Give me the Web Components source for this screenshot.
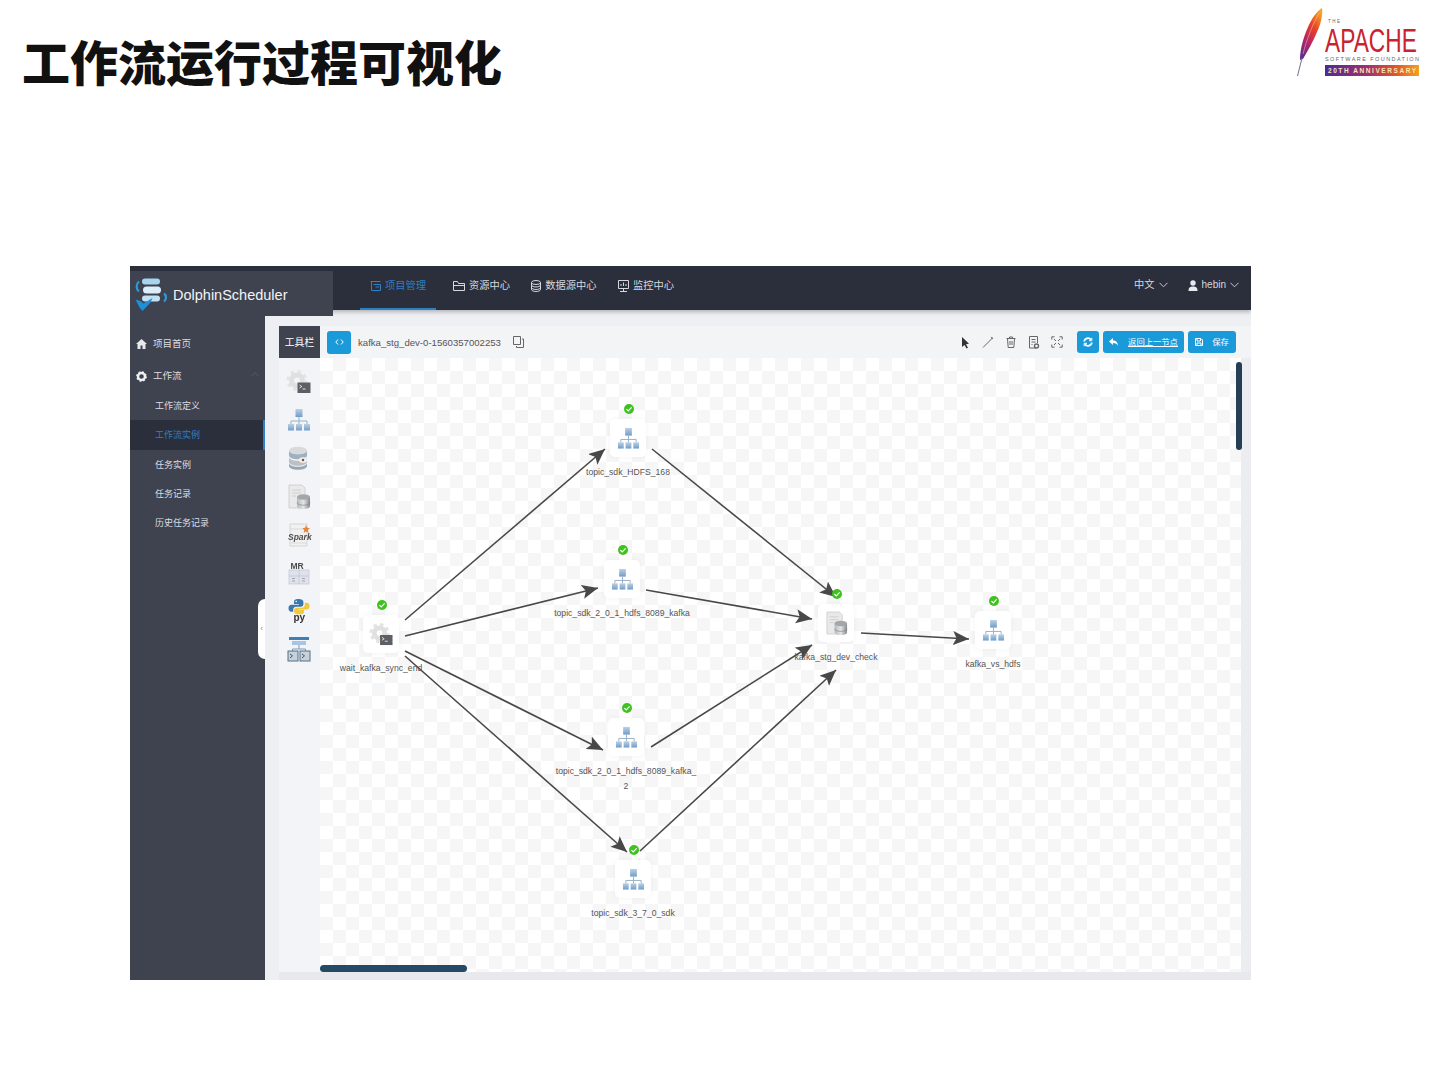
<!DOCTYPE html>
<html lang="zh">
<head>
<meta charset="utf-8">
<title>工作流运行过程可视化</title>
<style>
  html, body { margin: 0; padding: 0; background: #fff; }
  body { width: 1440px; height: 1080px; overflow: hidden; font-family: "Liberation Sans", "Noto Sans CJK SC", sans-serif; }
</style>
</head>
<body>
<ds-slide>
  <span slot="title">工作流运行过程可视化</span>
  <ds-apache-logo slot="logo"></ds-apache-logo>
  <ds-app>
    <ds-topnav slot="nav"></ds-topnav>
    <ds-sidebar slot="side"></ds-sidebar>
    <ds-workspace slot="main"></ds-workspace>
  </ds-app>
</ds-slide>

<script>
const CJK = '"Liberation Sans", "Noto Sans CJK SC", sans-serif';

// task type icons, used both in the toolbar and inside the dag nodes
const gradDefs = `<defs>
  <linearGradient id="blue" x1="0" y1="0" x2="0" y2="1"><stop offset="0" stop-color="#bcd0e3"/><stop offset="1" stop-color="#6f9dca"/></linearGradient>
  <linearGradient id="db" x1="0" y1="0" x2="1" y2="0"><stop offset="0" stop-color="#b5b8bb"/><stop offset=".5" stop-color="#e4e5e6"/><stop offset="1" stop-color="#85888b"/></linearGradient>
</defs>`;
const ICONS = {
  shell: `<circle cx="10" cy="10.500" r="9" fill="none" stroke="#e4e4e4" stroke-width="3" stroke-dasharray="3.600 3.500"/>
    <circle cx="10" cy="10.500" r="5.500" fill="none" stroke="#e0e0e0" stroke-width="5"/>
    <rect x="10.500" y="12.500" width="13" height="10.500" fill="#5c5f63"/><path d="M12.500 15l2.300 1.500-2.300 1.500M15.500 19h3" stroke="#fff" stroke-width=".8" fill="none"/>`,
  hier: `<rect x="8.500" y="1" width="7" height="8" fill="url(#blue)"/>
    <path d="M12 9v4M4 16v-3h16v3M12 13v3" stroke="#9ab0c6" stroke-width="1" fill="none"/>
    <rect x="1" y="16" width="6" height="6.500" fill="url(#blue)"/><rect x="9" y="16" width="6" height="6.500" fill="url(#blue)"/><rect x="17" y="16" width="6" height="6.500" fill="url(#blue)"/>`,
  sql: `<ellipse cx="11" cy="4.500" rx="9" ry="3.800" fill="#d8dadc"/><path d="M2 4.500v5c0 2.100 4 3.800 9 3.800s9-1.700 9-3.800v-5c0 2.100-4 3.800-9 3.800S2 6.600 2 4.500z" fill="#9fb0c0"/>
    <path d="M2 11v5c0 2.100 4 3.800 9 3.800s9-1.700 9-3.800v-5c0 2.100-4 3.800-9 3.800S2 13.100 2 11z" fill="#bcc0c4"/><path d="M2 17v3c0 2.100 4 3.800 9 3.800s9-1.700 9-3.800v-3c0 2.100-4 3.800-9 3.800S2 19.100 2 17z" fill="#98a6b3"/>
    <ellipse cx="16" cy="14" rx="4" ry="2.800" fill="#f3f3f3"/><circle cx="16" cy="14" r="1.300" fill="#8a4a3a"/>`,
  proc: `<path d="M2 0h13l3 3v20H2z" fill="#e9e9e9" stroke="#c9c9c9" stroke-width=".8"/><path d="M5 5h9M5 8h9M5 11h4" stroke="#d0d0d0"/>
    <path d="M10 12v9c0 1.700 3 3 6.500 3s6.500-1.300 6.500-3v-9z" fill="url(#db)"/><ellipse cx="16.500" cy="12" rx="6.500" ry="2.800" fill="#a4a7aa"/><path d="M10 17.500c0 1.500 3 2.700 6.500 2.700s6.500-1.200 6.500-2.700" fill="none" stroke="#777" stroke-width=".6"/>`,
  spark: `<path d="M3 1h17v22H3z" fill="#f1f1f1" stroke="#cfcfcf" stroke-width=".8"/><path d="M3 6h17M3 20h17" stroke="#d9d9d9"/>
    <text x="1" y="17" font-family="Liberation Sans, sans-serif" font-size="8.500" font-style="italic" font-weight="700" fill="#4d4d4d">Spark</text>
    <path d="M19 2l1.200 2.800 2.800.4-2.200 1.800.8 3-2.600-1.600-2.400 1.600.7-3-2-1.800 2.800-.4z" fill="#e8833a"/>`,
  mr: `<rect x="2" y="9" width="20" height="14" fill="#dfe2ea" stroke="#c4c7d0" stroke-width=".7"/><path d="M2 15h20M12 9v14" stroke="#c0c3cc" stroke-width=".7"/>
    <text x="3.500" y="8" font-family="Liberation Sans, sans-serif" font-size="8.500" font-weight="700" fill="#4c4c4c">MR</text>
    <path d="M5 17.500h3M5 20h3M15 17.500h3M15 20h3" stroke="#9a9da8" stroke-width=".9"/>`,
  python: `<path d="M11.500 0C8 0 7 1.200 7 2.800V5h4.800v.8H4.500C2.400 5.800 1.500 7.200 1.500 9.300c0 2.100 1 3.400 3 3.400h1.700v-2c0-1.700 1.300-3 3-3h4.700c1.400 0 2.500-1.100 2.500-2.500V2.800C16.400 1.100 14.600 0 11.500 0z" fill="#3a79ad"/><circle cx="9.200" cy="2.500" r=".8" fill="#fff"/>
    <path d="M12.500 15.500c3.500 0 4.500-1.100 4.500-2.400v-2.100h-4.800v-.6h7.300c2.100 0 3-1.300 3-3.400 0-2.100-1-3.200-3-3.200h-1.700v2c0 1.700-1.300 3-3 3H9.600c-1.400 0-2.500 1.100-2.500 2.500v1.800c0 1.600 2.300 2.400 5.400 2.400z" fill="#f2c83c"/>
    <text x="6.500" y="21.500" font-family="Liberation Sans, sans-serif" font-size="10" font-weight="700" fill="#333">py</text>`,
  sub: `<rect x="2" y="0" width="20" height="3" fill="#3f7fb8"/><rect x="5" y="4" width="14" height="4" fill="#a8c6e2"/><path d="M12 8v4M5.500 14v-2h13v2" stroke="#7b9ab8" fill="none"/>
    <rect x="1" y="14" width="10" height="10" fill="#c8d0d8" stroke="#50708c"/><rect x="13" y="14" width="10" height="10" fill="#c8d0d8" stroke="#50708c"/>
    <path d="M3 17l2.500 1.800L3 21M15 17l2.500 1.800L15 21" stroke="#40586e" fill="none"/>`
};

class DsSlide extends HTMLElement {
  constructor() {
    super();
    this.attachShadow({ mode: 'open' }).innerHTML = `<style>
      :host { display: block; width: 1440px; height: 1080px; background: #fff; }
      header { display: flex; justify-content: space-between; align-items: flex-start; height: 266px; padding-left: 22px; box-sizing: border-box; }
      h1 { margin: 30px 0 0; font: 900 48px/70px ${CJK}; color: #111; letter-spacing: 0; }
      .logo { margin-top: 6px; }
      .frame { margin-left: 130px; width: 1121px; }
    </style>
    <header><h1><slot name="title"></slot></h1><div class="logo"><slot name="logo"></slot></div></header>
    <div class="frame"><slot></slot></div>`;
  }
}

class DsApacheLogo extends HTMLElement {
  constructor() {
    super();
    this.attachShadow({ mode: 'open' }).innerHTML = `<style>:host { display: block; width: 143px; height: 72px; } svg { display: block; }</style>
    <svg width="143" height="72" viewBox="0 0 143 72">
      <defs>
        <linearGradient id="fe" x1=".8" y1="0" x2=".2" y2="1"><stop offset="0" stop-color="#f5a623"/><stop offset=".35" stop-color="#e8412a"/><stop offset=".7" stop-color="#b3226a"/><stop offset="1" stop-color="#5d2d8c"/></linearGradient>
        <linearGradient id="band"><stop offset="0" stop-color="#4a2a9c"/><stop offset=".45" stop-color="#a0306e"/><stop offset=".75" stop-color="#e0552c"/><stop offset="1" stop-color="#f5a01c"/></linearGradient>
      </defs>
      <path d="M25 2C26 8 24 18 20 26 16 36 10 46 6 53L3 54C3 44 6 32 11 21 15 12 20 5 25 2z" fill="url(#fe)"/>
      <path d="M.5 70L5 52" stroke="#7a6a8c" stroke-width="1" fill="none"/>
      <path d="M22 7C16 18 10 32 6 48" stroke="#f9d9a8" stroke-width=".7" fill="none" opacity=".7"/>
      <text x="31" y="16.500" font-family="Liberation Sans, sans-serif" font-size="4.500" fill="#666" textLength="12" lengthAdjust="spacing">THE</text>
      <text transform="translate(28 46) scale(.69 1)" font-family="Liberation Sans, sans-serif" font-size="33" fill="#c8242f">APACHE</text>
      <text x="28" y="55" font-family="Liberation Sans, sans-serif" font-size="5.500" fill="#666" textLength="94" lengthAdjust="spacing">SOFTWARE FOUNDATION</text>
      <rect x="28" y="59" width="94" height="11" fill="url(#band)"/>
      <text x="31" y="67" font-family="Liberation Sans, sans-serif" font-size="6.500" font-weight="700" fill="#f6e7b0" textLength="88" lengthAdjust="spacing">20TH ANNIVERSARY</text>
    </svg>`;
  }
}

class DsApp extends HTMLElement {
  constructor() {
    super();
    this.attachShadow({ mode: 'open' }).innerHTML = `<style>
      :host { display: grid; position: relative; grid-template-columns: 135px 1fr; grid-template-rows: 44px 1fr; height: 714px; overflow: hidden; }
      .nav { grid-column: 1 / 3; z-index: 1; box-shadow: 0 2px 4px rgba(0,0,0,.25); }
      .brand { position: absolute; left: 0; top: 5px; width: 203px; height: 45px; background: #3f4350; z-index: 2; display: flex; align-items: center; padding-left: 2px; box-sizing: border-box; font: 14.500px/1 "Liberation Sans", sans-serif; gap: 1px; }
      .brand span { margin-top: 4px; color: #f2f3f5; }
      .fold { position: absolute; left: 128px; top: 333px; width: 7px; height: 60px; background: #fff; border-radius: 7px 0 0 7px; z-index: 2; display: flex; align-items: center; justify-content: center; color: #888; font: 8px/1 "Liberation Sans", sans-serif; }
    </style>
    <div class="nav"><slot name="nav"></slot></div>
    <slot name="side"></slot>
    <slot name="main"></slot>
    <div class="brand">
      <svg width="40" height="38" viewBox="0 0 40 38">
        <path d="M7 6.500a6.500 6.500 0 0 0 0 10" stroke="#2b9bd8" stroke-width="2.200" fill="none"/>
        <path d="M32 18.500a5 5 0 0 1 0 8" stroke="#2b9bd8" stroke-width="2.200" fill="none"/>
        <rect x="10" y="3.500" width="18" height="6" rx="3" fill="#a8d4ee"/>
        <rect x="11" y="11.500" width="18" height="7" rx="3.500" fill="#dceef9"/>
        <rect x="10" y="20.500" width="18" height="6" rx="3" fill="#c4e0f3"/>
        <path d="M3.500 24.500l5 1.500 3 2.500 9-5.500-2 4.500-8 8.500-3-3.500z" fill="#1f8fd8"/>
      </svg>
      <span>DolphinScheduler</span>
    </div>
    <div class="fold">‹</div>`;
  }
}

class DsTopnav extends HTMLElement {
  constructor() {
    super();
    const item = (svg, text, w, cls) => `<a class="${cls || ''}" style="width:${w}px">${svg}<span>${text}</span></a>`;
    const stroke = 'fill="none" stroke="currentColor" stroke-width="1"';
    const chev = `<svg width="9" height="6" viewBox="0 0 9 6"><path d="M.5 .8l4 4 4-4" fill="none" stroke="#c8cad0" stroke-width="1"/></svg>`;
    this.attachShadow({ mode: 'open' }).innerHTML = `<style>
      :host { display: flex; height: 44px; background: #2b2e3b; color: #d6d8de; font: 10.250px/1 ${CJK}; padding-left: 230px; padding-right: 12px; align-items: stretch; white-space: nowrap; }
      a { display: flex; align-items: center; justify-content: center; gap: 3px; height: 44px; box-sizing: border-box; padding-bottom: 2px; border-bottom: 2px solid transparent; flex: none; }
      a.on { color: #2f7fc4; border-bottom-color: #2f7fc4; }
      .right { margin-left: auto; display: flex; align-items: center; gap: 20px; padding-bottom: 6px; }
      .right div { display: flex; align-items: center; gap: 4px; }
      .right div.user { font-size: 10px; }
    </style>
    ${item(`<svg width="12" height="12" viewBox="0 0 12 12" ${stroke}><path d="M.5 1.500h10M1.500 1.500v9h9M3.500 4.500h7v6M5.500 7h4"/></svg>`, '项目管理', 76, 'on')}
    <div style="width:16px"></div>
    ${item(`<svg width="13" height="12" viewBox="0 0 13 12" ${stroke}><path d="M.5 10.500v-9h4l1 2h6v7zM.5 5.500h11"/></svg>`, '资源中心', 59)}
    <div style="width:18px"></div>
    ${item(`<svg width="12" height="12" viewBox="0 0 12 12" ${stroke}><ellipse cx="6" cy="2.500" rx="4.500" ry="2"/><path d="M1.500 2.500v7c0 1.100 2 2 4.500 2s4.500-.9 4.500-2v-7M1.500 5c0 1.100 2 2 4.500 2s4.500-.9 4.500-2M1.500 7.500c0 1.100 2 2 4.500 2s4.500-.9 4.500-2"/></svg>`, '数据源中心', 69)}
    <div style="width:18px"></div>
    ${item(`<svg width="13" height="13" viewBox="0 0 13 13" ${stroke}><path d="M1.500 .5h10v8h-10zM6.500 8.500v3M3 11.500h7M4 6V4M6.500 6V2.500M9 6V4"/></svg>`, '监控中心', 59)}
    <div class="right">
      <div>中文 ${chev}</div>
      <div class="user"><svg width="10" height="11" viewBox="0 0 10 11" fill="#e8e9ec"><circle cx="5" cy="3" r="2.700"/><path d="M.5 11c0-3.500 1.500-4.500 4.500-4.500s4.500 1 4.500 4.500z"/></svg>hebin ${chev}</div>
    </div>`;
  }
}

class DsSidebar extends HTMLElement {
  constructor() {
    super();
    const home = `<svg width="11" height="10" viewBox="0 0 11 10" fill="#e8e9ec"><path d="M5.500 0L0 5h1.500v5h3V6.500h2V10h3V5H11z"/></svg>`;
    const gear = `<svg width="11" height="11" viewBox="0 0 11 11"><circle cx="5.500" cy="5.500" r="3.500" fill="none" stroke="#f0f1f3" stroke-width="2.400"/><circle cx="5.500" cy="5.500" r="4.700" fill="none" stroke="#f0f1f3" stroke-width="1.300" stroke-dasharray="1.800 1.900"/></svg>`;
    this.attachShadow({ mode: 'open' }).innerHTML = `<style>
      :host { display: block; background: #3f4350; color: #dcdde2; font: 9px/1 ${CJK}; padding-top: 17px; }
      .top { height: 32px; display: flex; align-items: center; gap: 6px; padding: 2px 0 0 6px; box-sizing: border-box; font-size: 9.500px; }
      .sub { height: 29.300px; display: flex; align-items: center; padding: 2px 0 0 25px; box-sizing: border-box; }
      .sub.on { background: #2b2e3b; color: #2f7fc4; border-right: 2px solid #2f7fc4; }
      .arrow { margin-left: auto; margin-right: 7px; width: 5px; height: 5px; border-top: 1px solid #4f5360; border-left: 1px solid #4f5360; transform: rotate(45deg); }
    </style>
    <div class="top">${home}项目首页</div>
    <div class="top">${gear}工作流<span class="arrow"></span></div>
    <div class="sub">工作流定义</div>
    <div class="sub on">工作流实例</div>
    <div class="sub">任务实例</div>
    <div class="sub">任务记录</div>
    <div class="sub">历史任务记录</div>`;
  }
}

class DsTaskIcon extends HTMLElement {
  constructor() {
    super();
    const size = this.getAttribute('size') || 24;
    this.attachShadow({ mode: 'open' }).innerHTML = `<style>:host { display: block; width: ${size}px; height: ${size}px; } svg { display: block; overflow: visible; filter: blur(.35px); }</style>
    <svg width="${size}" height="${size}" viewBox="0 0 24 24">${gradDefs}${ICONS[this.getAttribute('type')]}</svg>`;
  }
}

class DsWorkspace extends HTMLElement {
  constructor() {
    super();
    const tools = ['shell', 'hier', 'sql', 'proc', 'spark', 'mr', 'python', 'sub'];
    const s = 'fill="none" stroke="#666" stroke-width="1"';
    this.attachShadow({ mode: 'open' }).innerHTML = `<style>
      :host { display: grid; grid-template-columns: 41px 921px 10px; grid-template-rows: 32px 614px 8px; padding: 16px 0 0 14px; background: #eeeff2; position: relative; font: 10px/1 ${CJK}; }
      .head { background: #3f4350; color: #fff; font: 9.800px/33px ${CJK}; text-align: center; }
      .strip { background: #f3f4f6; display: flex; align-items: center; padding: 0 15px 0 7px; grid-column: 2 / 4; color: #555; }
      .code { width: 24px; height: 23px; border-radius: 3px; background: #1a9ad9; color: #fff; display: flex; align-items: center; justify-content: center; }
      .name { margin: 1px 0 0 7px; color: #555; font-size: 9.600px; white-space: nowrap; }
      .copy { margin-left: 12px; display: flex; }
      .tools { margin-left: auto; display: flex; align-items: center; gap: 11px; margin-right: 10px; }
      .btn { height: 22px; border-radius: 3px; background: #1a9ad9; color: #fff; display: flex; align-items: center; justify-content: center; gap: 9px; font-size: 8.300px; margin-left: 4px; white-space: nowrap; }
      .btn u { text-decoration-thickness: 1px; }
      .col { background: #f3f4f8; display: flex; flex-direction: column; align-items: center; padding: 12px 1px 0 0; gap: 14.200px; }
      .rb { background: #eceDF0; }
      .bb { grid-column: 1 / 4; background: #e8e9ec; }
      .vbar { position: absolute; left: 971px; top: 52px; width: 6px; height: 88px; border-radius: 3px; background: #263f55; }
      .hbar { position: absolute; left: 55px; top: 655px; width: 147px; height: 7px; border-radius: 4px; background: #264a66; }
    </style>
    <div class="head">工具栏</div>
    <div class="strip">
      <div class="code"><svg width="9" height="8" viewBox="0 0 9 8" fill="none" stroke="#fff" stroke-width="1"><path d="M3 1.500L.8 4 3 6.500M6 1.500L8.200 4 6 6.500"/></svg></div>
      <span class="name">kafka_stg_dev-0-1560357002253</span>
      <span class="copy"><svg width="11" height="12" viewBox="0 0 11 12" ${s}><path d="M.5 .5h7v8h-7z"/><path d="M9 3h1.500v8.500h-7V10"/></svg></span>
      <div class="tools">
        <svg width="12" height="13" viewBox="0 0 12 13" fill="#333"><path d="M3 1v10l2.500-2 2 3.500 1.500-.8-2-3.500 3-.4z"/></svg>
        <svg width="12" height="12" viewBox="0 0 12 12" ${s}><path d="M1 11.500L10 2.500"/><path d="M9.500 2.500l1-1" stroke-width="2"/></svg>
        <svg width="12" height="12" viewBox="0 0 12 12" ${s}><path d="M1.500 2.500h9M4.500 2.500v-1.500h3v1.500M2.500 2.500l.7 9h5.600l.7-9M5 5v4M7 5v4"/></svg>
        <svg width="12" height="13" viewBox="0 0 12 13" ${s}><path d="M8 12H1.500V.5h8V7M3.500 3.500h4M3.500 6h4M3.500 8.500h1"/><circle cx="8.500" cy="10" r="2" stroke-width="1.400"/></svg>
        <svg width="12" height="12" viewBox="0 0 12 12" ${s}><path d="M.8 3.500V.8H3.500M8.500 .8h2.700V3.500M.8 8.500v2.700H3.500M8.500 11.200h2.700V8.500M3 3l2 2M9 3L7 5M3 9l2-2M9 9L7 7"/></svg>
      </div>
      <div class="btn" style="width:22px"><svg width="10" height="10" viewBox="0 0 10 10" fill="none" stroke="#fff" stroke-width="1.800"><path d="M1.200 4.500a3.800 3.800 0 0 1 6.800-1.800M8.800 5.500a3.800 3.800 0 0 1-6.800 1.800"/><path d="M8.800 .8v2.900H6M1.200 9.200V6.300H4" stroke-width="1"/></svg></div>
      <div class="btn" style="width:81px"><svg width="10" height="9" viewBox="0 0 10 9" fill="#fff"><path d="M4 0L0 3.500 4 7V5c2.500 0 4 .8 5 3 0-3.500-2-5.500-5-5.500z"/></svg><u>返回上一节点</u></div>
      <div class="btn" style="width:48px"><svg width="8" height="8" viewBox="0 0 8 8" fill="none" stroke="#fff" stroke-width="1"><path d="M.5 .5h5.500l1.500 1.500v5.500h-7zM2 .5v2.500h3.500V.5M2 7.500V5h4v2.500"/></svg>保存</div>
    </div>
    <div class="col">${tools.map((t) => `<ds-task-icon type="${t}"></ds-task-icon>`).join('')}</div>
    <ds-dag></ds-dag>
    <div class="rb"></div>
    <div class="bb"></div>
    <div class="vbar"></div>
    <div class="hbar"></div>`;
  }
}

class DsNode extends HTMLElement {
  constructor() {
    super();
    const type = this.getAttribute('type');
    this.attachShadow({ mode: 'open' }).innerHTML = `<style>
      :host { position: absolute; left: ${this.getAttribute('x')}px; top: ${this.getAttribute('y') - 35}px; transform: translateX(-50%); width: 160px; display: flex; flex-direction: column; align-items: center; color: #555; font: 8.650px/15px "Liberation Sans", sans-serif; text-align: center; white-space: nowrap; }
      .check { width: 12px; height: 12px; display: block; transform: translateX(1px); }
      .box { width: 36px; height: 38px; margin-top: 4px; background: #fff; border-radius: 5px; box-shadow: 0 0 6px rgba(0,0,0,.05); display: flex; align-items: center; justify-content: center; }
      .label { margin-top: 8px; }
    </style>
    <svg class="check" viewBox="0 0 12 12"><circle cx="6" cy="6" r="5" fill="#3fc21f"/><path d="M3.400 6.100l1.900 1.900 3.300-3.600" fill="none" stroke="#fff" stroke-width="1.200"/></svg>
    <div class="box"><ds-task-icon type="${type}" size="23"></ds-task-icon></div>
    <div class="label"><slot></slot></div>`;
  }
}

class DsDag extends HTMLElement {
  constructor() {
    super();
    // [x1,y1,x2,y2] in canvas coordinates, tip of the arrow at x2,y2
    const edges = [
      [85, 262, 285, 91], [85, 278, 278, 230], [85, 293, 283, 392], [85, 298, 307, 494],
      [332, 91, 516, 239], [326, 232, 492, 261], [331, 389, 492, 287], [320, 493, 516, 312],
      [541, 275, 649, 281]
    ];
    const nodes = [
      ['hier', 308, 80, 'topic_sdk_HDFS_168'],
      ['hier', 302, 221, 'topic_sdk_2_0_1_hdfs_8089_kafka'],
      ['shell', 61, 276, 'wait_kafka_sync_end'],
      ['proc', 516, 265, 'kafka_stg_dev_check'],
      ['hier', 673, 272, 'kafka_vs_hdfs'],
      ['hier', 306, 379, 'topic_sdk_2_0_1_hdfs_8089_kafka_<br>2'],
      ['hier', 313, 521, 'topic_sdk_3_7_0_sdk']
    ];
    this.attachShadow({ mode: 'open' }).innerHTML = `<style>
      :host { display: block; position: relative; overflow: hidden; background: #fff conic-gradient(#f6f6f7 25%, #fff 0 50%, #f6f6f7 0 75%, #fff 0) 0 0 / 26px 26px; }
      svg { position: absolute; left: 0; top: 0; }
    </style>
    <svg width="921" height="614">
      <defs><marker id="arr" markerUnits="userSpaceOnUse" markerWidth="18" markerHeight="16" refX="16" refY="7" orient="auto"><path d="M0 0L16 7 0 14 3.500 7z" fill="#484848"/></marker></defs>
      ${edges.map((e) => `<line x1="${e[0]}" y1="${e[1]}" x2="${e[2]}" y2="${e[3]}" stroke="#484848" stroke-width="1.600" marker-end="url(#arr)"/>`).join('')}
    </svg>
    ${nodes.map((n) => `<ds-node type="${n[0]}" x="${n[1]}" y="${n[2]}">${n[3]}</ds-node>`).join('')}`;
  }
}

customElements.define('ds-task-icon', DsTaskIcon);
customElements.define('ds-node', DsNode);
customElements.define('ds-dag', DsDag);
customElements.define('ds-workspace', DsWorkspace);
customElements.define('ds-sidebar', DsSidebar);
customElements.define('ds-topnav', DsTopnav);
customElements.define('ds-app', DsApp);
customElements.define('ds-apache-logo', DsApacheLogo);
customElements.define('ds-slide', DsSlide);
</script>
</body>
</html>
